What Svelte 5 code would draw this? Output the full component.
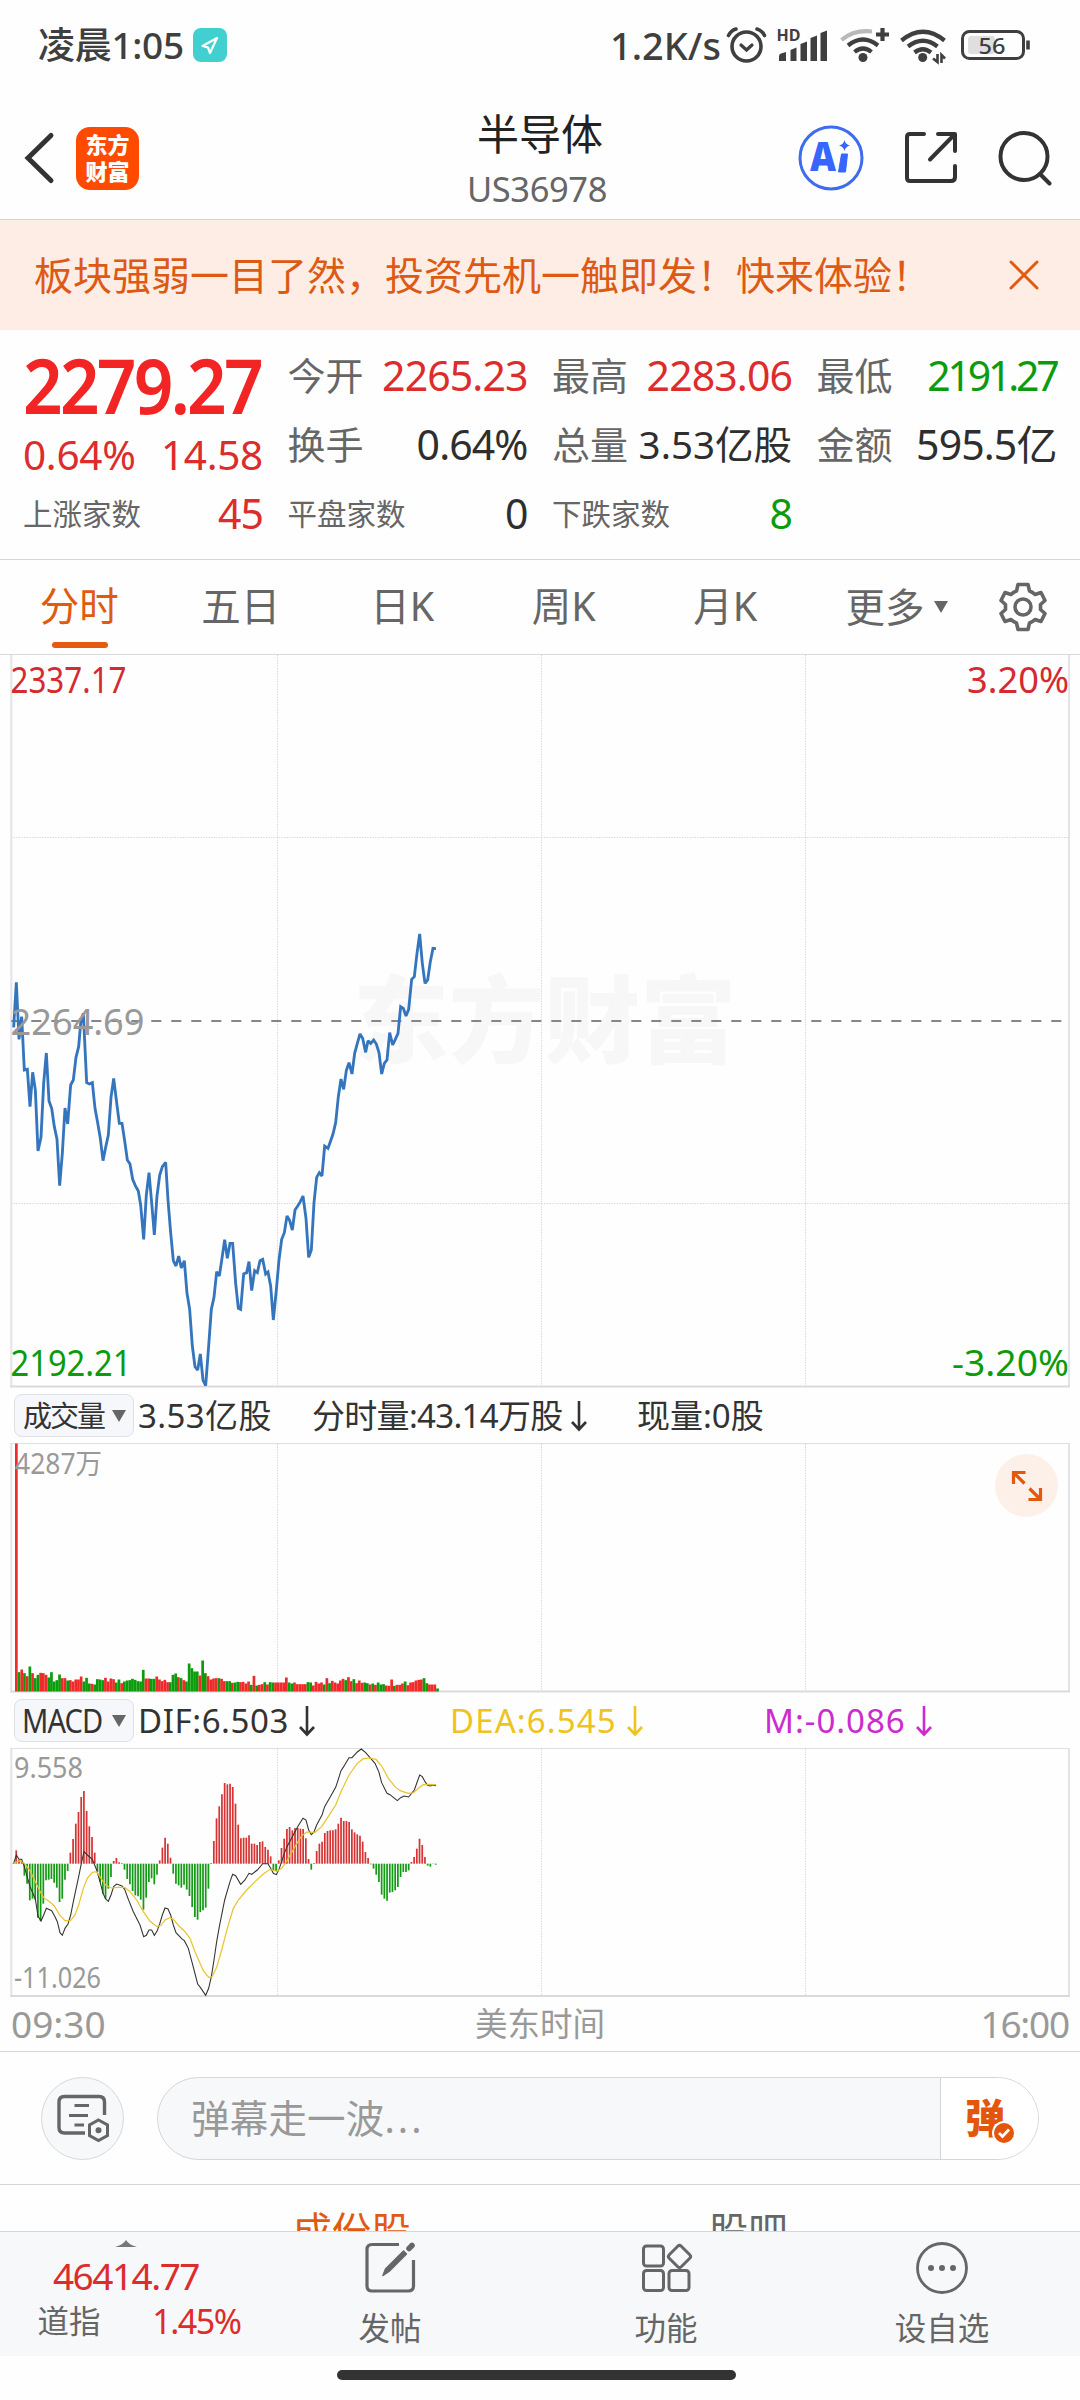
<script>
  const quotes = [
    [
      { label: '今开', value: '2265.23', tone: 'up' },
      { label: '换手', value: '0.64%', tone: 'flat' },
      { label: '平盘家数', value: '0', tone: 'flat', small: true }
    ],
    [
      { label: '最高', value: '2283.06', tone: 'up' },
      { label: '总量', value: '3.53亿股', tone: 'flat', fit: 'tight' },
      { label: '下跌家数', value: '8', tone: 'down', small: true }
    ],
    [
      { label: '最低', value: '2191.27', tone: 'down', fit: 'narrow' },
      { label: '金额', value: '595.5亿', tone: 'flat' }
    ]
  ];
  const tabs = ['分时', '五日', '日K', '周K', '月K'];

  // Price path, three units per pixel, measured from the chart's y = 900 line
  const price =
    '41,382 49,247 57,418 65,350 73,510 82,508 90,620 98,517 106,570 114,753 123,712 131,550 139,459 147,603 155,625 163,680 171,718 179,857 187,760 195,624 203,672 212,555 220,540 228,472 236,440 242,370 250,340 260,548 268,552 277,548 285,625 293,668 301,715 309,782 317,742 325,705 333,592 341,535 350,608 358,670 366,670 374,722 382,780 390,792 398,838 406,857 415,873 422,915 431,1018 439,885 447,818 455,908 463,1005 471,888 479,826 487,800 497,787 504,900 512,998 520,1082 528,1098 536,1068 544,1104 553,1082 561,1180 569,1228 577,1338 585,1400 593,1410 601,1362 609,1440 617,1457 626,1338 634,1228 642,1192 650,1115 658,1128 666,1075 674,1019 682,1075 690,1030 698,1030 707,1150 715,1225 722,1228 731,1122 740,1118 747,1085 755,1172 764,1112 772,1118 780,1082 788,1078 797,1122 804,1116 812,1158 820,1260 829,1170 837,1080 845,1018 853,998 861,948 869,962 877,990 885,930 893,918 901,905 909,888 918,955 926,1072 934,1050 942,908 950,832 958,818 966,828 974,738 984,745 991,725 999,702 1007,668 1015,590 1023,537 1031,568 1039,512 1047,488 1056,522 1064,460 1072,430 1080,402 1088,415 1097,457 1104,422 1112,430 1121,420 1129,432 1137,458 1145,522 1153,490 1161,480 1169,398 1178,435 1186,418 1194,400 1202,320 1210,325 1218,348 1226,328 1235,238 1243,230 1251,160 1259,102 1267,190 1275,250 1283,240 1291,185 1299,145 1308,146';

  // Volume per minute: r = rising, g = falling
  const volumes =
    'r744 g58 r66 g55 r46 g75 r55 g40 g50 r56 r55 r50 g42 g58 g30 g34 g51 r40 r40 g33 r34 r30 r36 r36 r45 g30 g41 g24 r23 g21 g37 g36 g34 r41 r30 r39 r37 g27 g36 r25 g30 g33 g34 g38 g35 g31 g30 g65 r39 r39 g38 g38 r45 r36 r31 r35 r28 g28 g50 g54 r43 g40 r34 g30 g84 g70 g60 g60 r48 g93 g55 r46 r36 r39 r40 g40 r38 r31 g31 g31 r26 g27 g29 r28 r29 r24 r30 g20 r47 g18 r20 r22 g28 r21 g28 g27 r27 r27 r27 r27 r42 g27 g24 r27 r22 r22 r22 r22 g28 g27 r18 r29 r24 r27 g21 r40 g25 r32 r27 r24 r33 r38 g34 r43 r31 g37 r25 r33 r26 g27 g25 r21 g24 r20 g27 g21 g22 r18 r17 r36 g17 r20 r20 r24 g30 r19 r27 r28 r33 r35 r36 g40 g25 r21 r21 r21 g9'
      .split(' ')
      .map((v, i) => ({ x: 15 + i * 2.7, h: Number(v.slice(1)) / 3, up: v[0] === 'r' }));

  const histogram =
    '0 40 12 8 -36 -60 -110 -105 -108 -162 -172 -120 -50 -48 -46 -57 -72 -115 -105 -48 -22 33 74 120 155 200 218 158 112 80 33 -25 -55 -90 -105 -75 -40 8 17 4 0 -18 -46 -62 -82 -95 -98 -108 -138 -102 -55 -44 -62 -33 10 48 78 60 18 -30 -60 -65 -72 -63 -78 -97 -130 -160 -168 -145 -140 -132 -75 0 68 136 172 208 242 238 240 230 180 117 76 78 78 85 60 60 56 65 67 50 42 22 -20 -22 10 47 75 104 110 100 107 107 105 104 76 14 -18 0 38 60 66 92 98 100 100 103 120 138 128 128 125 103 94 88 84 66 35 17 -2 -15 -33 -55 -93 -105 -111 -87 -85 -80 -70 -40 -25 -25 -20 5 20 45 75 56 20 -6 -9 -1 -3'
      .split(' ')
      .map((v, i) => ({ x: 40.6 + i * 8.12, v: Number(v) }));

  const dif =
    '41,490 49,465 57,478 65,478 73,500 90,560 106,597 114,648 123,663 131,645 139,625 155,632 165,650 172,665 180,698 187,706 195,685 204,672 212,645 220,605 236,530 244,490 252,455 262,465 277,478 290,510 300,545 309,580 317,597 325,604 333,585 341,560 350,552 366,558 374,568 385,598 400,635 420,675 431,710 439,706 447,690 455,690 463,706 471,694 479,672 487,645 495,624 504,627 512,645 520,675 528,698 545,716 553,722 565,745 577,790 593,852 601,862 617,886 626,865 634,830 642,780 650,725 658,680 674,600 690,545 698,523 707,527 722,553 735,540 747,520 755,523 772,510 788,491 804,491 812,505 820,520 829,524 837,508 845,485 853,460 861,440 877,410 893,380 909,355 918,360 926,390 934,404 942,396 950,375 966,345 974,320 991,290 1007,262 1015,238 1023,212 1031,200 1047,173 1056,173 1072,156 1084,147 1097,158 1112,175 1125,190 1137,217 1145,248 1161,280 1170,284 1180,292 1192,302 1202,293 1212,288 1226,291 1243,270 1259,225 1267,230 1275,245 1283,256 1291,258 1299,255 1308,257';
  const dea =
    '41,490 60,482 73,490 90,512 106,545 123,580 131,593 147,604 163,618 179,645 195,662 211,662 225,645 236,615 250,565 262,535 277,517 290,515 301,532 317,555 333,564 355,562 374,562 390,575 410,600 430,635 450,664 471,680 483,676 495,660 510,653 520,658 537,678 553,693 570,715 585,755 610,812 626,832 636,830 650,802 665,750 682,685 700,625 715,600 740,570 765,545 790,522 810,508 830,514 845,505 861,482 885,440 905,407 920,396 945,397 965,380 991,340 1007,315 1023,275 1047,225 1072,190 1090,176 1110,174 1128,178 1145,198 1165,235 1185,260 1200,272 1225,280 1240,278 1255,265 1270,254 1285,253 1308,254';
  const gridX = [277.5, 541.5, 805.5];
</script>

{#snippet downArrow()}
  <svg class="down-arrow" width="16" height="32" viewBox="0 0 16 32">
    <path d="M8 1V29M1 22L8 29.5L15 22" fill="none" stroke="currentColor" stroke-width="2.6" />
  </svg>
{/snippet}

<div class="screen">
  <div class="status">
    <div class="clock">
      <span class="time">凌晨1:05</span>
      <span class="loc">
        <svg width="34" height="34" viewBox="0 0 34 34"><path d="M24 10L9.500 18L15 19.500L17 25Z" fill="none" stroke="#fff" stroke-width="2.200" stroke-linejoin="round" /></svg>
      </span>
    </div>
    <div class="signals">
      <span class="rate">1.2K/s</span>
      <svg width="313" height="40" viewBox="724 25 313 40" fill="none" stroke="#3f3f3f">
        <circle cx="746.500" cy="46.500" r="14.500" stroke-width="3.600" />
        <path d="M741 45L746.500 50L752 45" stroke-width="3.200" stroke-linecap="round" />
        <path d="M728.500 35.500Q731 30.500 736 29M757 29Q762 30.500 764.500 35.500" stroke-width="3.600" stroke-linecap="round" />
        <text class="hd" x="776.500" y="41" textLength="24" lengthAdjust="spacingAndGlyphs">HD</text>
        <g fill="#3f3f3f" stroke="none">
          <path d="M779 56Q779 54 781 53.500L786 52V61H779ZM790.500 50L796.500 47.500V61H790.500ZM800.500 44L807 41.500V61H800.500ZM810.500 38L817 35.500V61H810.500ZM820.500 33L827 30.500V61H820.500Z" />
          <circle cx="863" cy="57.500" r="4.500" />
          <circle cx="922.700" cy="57.500" r="4.500" />
        </g>
        <path d="M841.500 40Q854 29.500 872 31.500" stroke="#b9b9b9" stroke-width="4.200" />
        <path d="M848 45.500Q863 33.500 878 45.500M854.500 52Q863 45 871.500 52M882.500 28V41M876 34.500H889" stroke-width="4.200" />
        <path d="M901.500 40.500Q923 23 944.500 40.500M908 46.500Q923 35 937.500 46.500M914.500 52.500Q923 46 931 52.500" stroke-width="4.200" />
        <path d="M937.500 54V62L933 58.500M941.500 63V55L945 58.500" stroke-width="2.600" />
        <rect x="962.500" y="31.500" width="61" height="27" rx="7" stroke-width="3" />
        <rect x="968" y="36" width="27" height="18" rx="3" fill="#dfdfdf" stroke="none" />
        <path d="M1028 40.500V49.500" stroke-width="3.600" />
        <text class="batt" x="978.500" y="54" textLength="27" lengthAdjust="spacingAndGlyphs">56</text>
      </svg>
    </div>
  </div>

  <header>
    <div class="left">
      <svg width="32" height="54" viewBox="0 0 32 54"><path d="M28 4.500L5 27L28 49.500" fill="none" stroke="#333" stroke-width="5" stroke-linecap="round" /></svg>
      <div class="logo"><span>东方</span><span>财富</span></div>
    </div>
    <div class="title">
      <h1>半导体</h1>
      <p>US36978</p>
    </div>
    <div class="actions">
      <svg width="66" height="66" viewBox="0 0 66 66">
        <circle cx="33" cy="33" r="31" fill="none" stroke="#3f6bf0" stroke-width="3" />
        <text class="ai" x="12" y="46" textLength="26" lengthAdjust="spacingAndGlyphs">A</text>
        <path d="M43.500 29H49.500L47.500 47H40.500Z" fill="#3766ff" stroke="#3766ff" stroke-linejoin="round" />
        <path d="M46.500 15Q47.500 19.500 52 20.500Q47.500 21.500 46.500 26Q45.500 21.500 41 20.500Q45.500 19.500 46.500 15Z" fill="#3766ff" />
      </svg>
      <svg width="54" height="54" viewBox="0 0 54 54" fill="none" stroke="#333" stroke-width="4" stroke-linecap="round" stroke-linejoin="round">
        <path d="M20 3H6Q3 3 3 6V47Q3 50 6 50H47Q51 50 51 46V35M34 3H51V20M50 4L26 28.500" />
      </svg>
      <svg width="54" height="56" viewBox="0 0 54 56" fill="none" stroke="#333" stroke-width="4" stroke-linecap="round">
        <circle cx="26" cy="26.500" r="23.500" /><path d="M42 44L51.500 53.500" />
      </svg>
    </div>
  </header>

  <div class="banner">
    <span>板块强弱一目了然，投资先机一触即发！快来体验！</span>
    <svg width="30" height="30" viewBox="0 0 30 30"><path d="M2 2L28 28M28 2L2 28" stroke="#e5590f" stroke-width="3" stroke-linecap="round" /></svg>
  </div>

  <section class="quote">
    <div class="col">
      <div class="big">2279.27</div>
      <div class="change"><span>0.64%</span><span>14.58</span></div>
      <div class="cell"><span class="label small">上涨家数</span><span class="value up">45</span></div>
    </div>
    {#each quotes as column}
      <div class="col">
        {#each column as q}
          <div class="cell">
            <span class="label" class:small={q.small}>{q.label}</span>
            <span class="value {q.tone} {q.fit ?? ''}">{q.value}</span>
          </div>
        {/each}
      </div>
    {/each}
  </section>

  <nav class="tabs">
    {#each tabs as tab, i}
      <span class="tab" class:active={i === 0}>{tab}</span>
    {/each}
    <span class="more">更多<svg width="14" height="12" viewBox="0 0 14 12"><path d="M0 0H14L7 12Z" fill="#666" /></svg></span>
    <svg class="gear" width="48" height="50" viewBox="-24 -25 48 50" fill="none" stroke="#666" stroke-width="3.600" stroke-linejoin="round">
      <path d="M-5 -22.500H5L6.500 -16Q9.500 -15 12 -12.500L18 -14.500L22 -6.500L17.500 -2.500V2.500L22 6.500L18 14.500L12 12.500Q9.500 15 6.500 16L5 22.500H-5L-6.500 16Q-9.500 15 -12 12.500L-18 14.500L-22 6.500L-17.500 2.500V-2.500L-22 -6.500L-18 -14.500L-12 -12.500Q-9.500 -15 -6.500 -16Z" />
      <circle r="8" />
    </svg>
  </nav>

  <svg class="chart" width="1080" height="733" viewBox="0 655 1080 733">
    <text class="watermark" x="353" y="1056" textLength="383" lengthAdjust="spacingAndGlyphs">东方财富</text>
    <g class="grid">
      {#each gridX as x}<path d="M{x} 655V1386" />{/each}
      <path d="M11 837.500H1069M11 1203.500H1069" />
    </g>
    <path class="frame" d="M11.300 655V1386M1069 655V1386" />
    <path class="base" d="M10 1386.500H1070" />
    <path d="M11.300 1021H1063" stroke="#868686" stroke-width="2" stroke-dasharray="10 10" />
    <g transform="translate(0 900) scale(.33333)">
      <polyline points={price} fill="none" stroke="#3475bd" stroke-width="8.500" stroke-linejoin="miter" stroke-miterlimit="2" />
    </g>
    <g class="axis">
      <text x="10.500" y="693" textLength="116" lengthAdjust="spacingAndGlyphs" class="up">2337.17</text>
      <text x="967" y="693" textLength="102" lengthAdjust="spacingAndGlyphs" class="up">3.20%</text>
      <text x="10.500" y="1035" textLength="134" lengthAdjust="spacingAndGlyphs" class="mid">2264.69</text>
      <text x="10.500" y="1376" textLength="121" lengthAdjust="spacingAndGlyphs" class="down">2192.21</text>
      <text x="952" y="1376" textLength="117" lengthAdjust="spacingAndGlyphs" class="down">-3.20%</text>
    </g>
  </svg>

  <div class="indicator vol">
    <span class="chip"><b>成交量</b><svg width="14" height="12" viewBox="0 0 14 12"><path d="M0 0H14L7 12Z" fill="#666" /></svg></span>
    <span class="first">3.53亿股</span>
    <span class="second">分时量:43.14万股{@render downArrow()}</span>
    <span>现量:0股</span>
  </div>

  <div class="panel">
    <svg class="chart" width="1080" height="250" viewBox="0 1443 1080 250">
      <g class="grid">{#each gridX as x}<path d="M{x} 1444V1691" />{/each}</g>
      <path class="frame" d="M11.300 1443V1691M1069 1443V1691" />
      <path class="top" d="M10 1443.500H1070" />
      <path class="base" d="M10 1691.500H1070" />
      {#each volumes as v}
        <rect x={v.x} y={1691.5 - v.h} width="2.700" height={v.h} fill={v.up ? '#ee2a2a' : '#0b9b0b'} />
      {/each}
      <text class="scale" x="15" y="1473.500" textLength="87" lengthAdjust="spacingAndGlyphs">4287万</text>
    </svg>
    <div class="expand">
      <svg width="34" height="34" viewBox="0 0 34 34" fill="none" stroke="#e2590f" stroke-width="3.200">
        <path d="M3.500 15V3.500H15.500M4 4L14.500 14.500M30.500 19V30.500H18.500M30 30L19.500 19.500" />
      </svg>
    </div>
  </div>

  <div class="indicator macd">
    <span class="chip"><b>MACD</b><svg width="14" height="12" viewBox="0 0 14 12"><path d="M0 0H14L7 12Z" fill="#666" /></svg></span>
    <span class="dif">DIF:6.503{@render downArrow()}</span>
    <span class="dea">DEA:6.545{@render downArrow()}</span>
    <span class="m">M:-0.086{@render downArrow()}</span>
  </div>

  <svg class="chart" width="1080" height="250" viewBox="0 1748 1080 250">
    <g class="grid">{#each gridX as x}<path d="M{x} 1749V1996" />{/each}</g>
    <path class="frame" d="M11.300 1748V1996M1069 1748V1996" />
    <path class="top" d="M10 1748.500H1070" />
    <path class="base" d="M10 1996H1070" />
    <g transform="translate(0 1700) scale(.33333)" fill="none">
      {#each histogram as h}
        <path d="M{h.x} 491V{491 - h.v - (h.v === 0 ? 2 : 0)}" stroke={h.v < 0 ? '#159a15' : '#d63434'} stroke-width="5.200" />
      {/each}
      <polyline points={dif} stroke="#333" stroke-width="3.200" />
      <polyline points={dea} stroke="#e8c42c" stroke-width="3.600" />
    </g>
    <text class="scale" x="14" y="1778" textLength="69" lengthAdjust="spacingAndGlyphs">9.558</text>
    <text class="scale" x="14" y="1988" textLength="87" lengthAdjust="spacingAndGlyphs">-11.026</text>
  </svg>

  <div class="times"><span>09:30</span><span class="zone">美东时间</span><span>16:00</span></div>

  <div class="comment">
    <div class="round">
      <svg width="54" height="50" viewBox="0 0 54 50" fill="none" stroke="#666" stroke-width="3.400">
        <path d="M48.500 22V9Q48.500 3.500 43 3.500H8.500Q3 3.500 3 9V34.500Q3 40 8.500 40H29" />
        <path d="M18.500 12.500H33M13 22.500H32M18.500 32H28" stroke-width="3" />
        <path d="M42.500 27L51.500 32V42.500L42.500 47.500L33.500 42.500V32Z" stroke-width="3" />
        <circle cx="42.500" cy="37.200" r="3" fill="#666" stroke="none" />
      </svg>
    </div>
    <div class="input">
      <span>弹幕走一波<i>...</i></span>
      <div class="send">
        <b>弹</b>
        <svg class="check" width="24" height="24" viewBox="0 0 24 24"><circle cx="12" cy="12" r="12" fill="#fff" /><circle cx="12" cy="12" r="10" fill="#e4560c" /><path d="M7 12L10.500 15.500L17 8.500" fill="none" stroke="#fff" stroke-width="2.800" /></svg>
      </div>
    </div>
  </div>

  <div class="sub">
    <span class="active">成份股</span><span>股吧</span>
  </div>

  <footer>
    <div class="index">
      <svg width="22" height="7" viewBox="0 0 22 7"><path d="M0 7Q8 5 11 0Q14 5 22 7Z" fill="#777" /></svg>
      <strong>46414.77</strong>
      <div><span>道指</span><em>1.45%</em></div>
    </div>
    <div class="item">
      <svg width="54" height="54" viewBox="0 0 54 54">
        <path d="M36 3.500H9Q4 3.500 4 8.500V45Q4 50 9 50H45Q50.500 50 50.500 45V19" fill="none" stroke="#666" stroke-width="3.200" />
        <path d="M46 7.500L49 4.500" stroke="#666" stroke-width="5.500" stroke-linecap="round" />
        <path d="M40.500 10L43.500 13L26 30.500L20 34.500L22.500 28Z" fill="#666" stroke="#666" stroke-width="1.500" stroke-linejoin="round" />
      </svg>
      <span>发帖</span>
    </div>
    <div class="item">
      <svg width="54" height="54" viewBox="0 0 54 54" fill="none" stroke="#666" stroke-width="3">
        <rect x="4.500" y="5" width="20" height="20" rx="3" /><rect x="4.500" y="29.500" width="20" height="20" rx="3" /><rect x="30" y="29.500" width="20" height="20" rx="3" />
        <rect x="32" y="7" width="17" height="17" rx="2.500" transform="rotate(45 40.500 15.500)" />
      </svg>
      <span>功能</span>
    </div>
    <div class="item">
      <svg width="54" height="54" viewBox="0 0 54 54">
        <circle cx="27" cy="27" r="24.500" fill="none" stroke="#666" stroke-width="2.800" />
        <g fill="#666"><circle cx="16" cy="27" r="3" /><circle cx="27" cy="27" r="3" /><circle cx="38" cy="27" r="3" /></g>
      </svg>
      <span>设自选</span>
    </div>
  </footer>
  <div class="home"><i></i></div>
</div>

<style>
  :global(body) { margin: 0; background: #fff; }
  .screen {
    width: 1080px; height: 2400px; overflow: hidden; background: #fefefe; color: #333;
    font-family: 'Noto Sans', 'Noto Sans CJK SC', sans-serif; white-space: nowrap;
    display: flex; flex-direction: column;
  }
  .screen > * { flex-shrink: 0; }
  svg { display: block; flex-shrink: 0; }
  h1, p { margin: 0; font-weight: 400; }

  .status { height: 90px; box-sizing: border-box; padding: 0 43px 0 38px; display: flex; justify-content: space-between; align-items: center; color: #3f3f3f; }
  .clock, .signals { display: flex; align-items: center; }
  .time { font-size: 37px; font-weight: 500; letter-spacing: -.3px; line-height: 60px; width: 155px; }
  .loc { width: 34px; height: 34px; border-radius: 8px; background: #42cfcf; }
  .rate { font-size: 38px; font-weight: 500; line-height: 60px; width: 114px; }
  .hd { font: 700 16px 'Noto Sans', sans-serif; fill: #3f3f3f; stroke: none; }
  .batt { font: 500 22px 'Noto Sans', sans-serif; fill: #3f3f3f; stroke: none; }

  header { height: 129px; border-bottom: 1px solid #d3d3d8; display: grid; grid-template-columns: 1fr 200px 1fr; }
  .left { display: flex; align-items: center; padding-left: 23px; height: 122px; box-sizing: border-box; margin-top: 7px; gap: 21px; }
  .logo { width: 63px; height: 63px; border-radius: 14px; background: #ff4a00; color: #fff; display: flex; flex-direction: column; align-items: center; justify-content: center; font-size: 22px; font-weight: 900; line-height: 27px; font-family: 'Noto Sans CJK SC', sans-serif; }
  .logo span { position: relative; top: -1px; }
  .title { text-align: center; }
  h1 { font-size: 42px; line-height: 60px; margin-top: 14px; color: #222; }
  p { font-size: 34.500px; line-height: 40px; letter-spacing: -0.4px; color: #666; margin: 5px 6px 0 0; }
  .actions { display: flex; align-items: center; justify-content: flex-end; padding-right: 28px; height: 136px; gap: 40px; }
  .ai { font: 900 40px 'Noto Sans', sans-serif; fill: #3766ff; }

  .banner { height: 110px; background: #fdede4; display: flex; justify-content: space-between; align-items: center; padding: 0 41px 0 34px; color: #dc5a14; font-size: 39px; font-family: 'Noto Sans CJK SC', sans-serif; }
  .banner span { line-height: 60px; margin-top: -4px; }

  .quote { height: 218px; padding: 11px 24px 0 23px; border-bottom: 1px solid #d6d6d8; display: grid; grid-template-columns: repeat(4, 240px); column-gap: 24.5px; }
  .big { height: 90px; width: 258px; line-height: 88px; font-size: 75px; font-weight: 600; letter-spacing: -3px; color: #f22424; transform: scaleX(.925); transform-origin: left; }
  .change { height: 48px; display: flex; justify-content: space-between; font-size: 40.500px; line-height: 48px; color: #dc2c2c; letter-spacing: -.3px; }
  .cell { height: 69px; display: flex; justify-content: space-between; align-items: center; line-height: 69px; }
  .label { font-size: 38px; color: #666; }
  .label.small { font-size: 29.500px; }
  .value { font-size: 41px; letter-spacing: -0.9px; }
  .value.tight { font-size: 38.500px; letter-spacing: 0; }
  .value.narrow { letter-spacing: -3.200px; }
  .up { color: #dc2c2c; fill: #d42a30; }
  .down { color: #0c9b0c; fill: #0c9b0c; }
  .flat { color: #2e2e2e; }

  .tabs { height: 94px; border-bottom: 1px solid #d9d9db; display: flex; align-items: center; font-size: 39.500px; color: #666; }
  .tab { width: 161.500px; height: 94px; line-height: 92px; text-align: center; position: relative; box-sizing: border-box; padding-right: 3px; }
  .tab.active { color: #e05a10; }
  .tab.active::after { content: ''; position: absolute; left: 52px; bottom: 6px; width: 56px; height: 6px; border-radius: 3px; background: #e35a10; }
  .more { display: flex; align-items: center; gap: 9px; padding-left: 38px; width: 154px; line-height: 92px; }
  .gear { margin-left: -1px; }

  .chart { overflow: visible; }
  .grid path { stroke: #d6d6da; stroke-width: 1; stroke-dasharray: 1.300 1.300; fill: none; }
  .frame { stroke: #e4e4e8; stroke-width: 2; }
  .top { stroke: #e0e0e3; stroke-width: 1; }
  .base { stroke: #dadadd; stroke-width: 1.800; }
  .watermark { font: 900 95px 'Noto Sans CJK SC', sans-serif; fill: #f7f7f7; }
  .axis text { font-size: 37px; }
  .mid { fill: #999; }
  .scale { font-size: 28.500px; fill: #999; }

  .indicator { height: 55px; display: flex; align-items: center; font-size: 33px; line-height: 50px; box-sizing: border-box; padding-left: 14px; }
  .indicator span { display: flex; align-items: center; }
  .chip { width: 120px; height: 43px; box-sizing: border-box; border: 1px solid #dfe1e8; border-radius: 8px; background: #f6f7fa; justify-content: space-between; padding: 0 7px 0 8px; margin-right: 4px; font-size: 29px; }
  .chip b { font-weight: 400; letter-spacing: -2px; }
  .macd .chip b { font-size: 33px; display: inline-block; transform: scaleX(.88); transform-origin: left; width: 78px; letter-spacing: -1px; margin-left: -1px; }
  .down-arrow { margin-left: 10px; }
  .first { width: 174px; letter-spacing: .4px; }
  .second { width: 325px; }
  .vol .second { letter-spacing: -.7px; }
  .vol .down-arrow { margin-left: 8px; }
  .dif { width: 312px; letter-spacing: .6px; }
  .dea { width: 314px; color: #efc31e; letter-spacing: 1.100px; }
  .m { color: #cb2ccb; letter-spacing: 1px; }

  .panel { position: relative; }
  .expand { position: absolute; left: 995px; top: 11px; width: 63px; height: 63px; border-radius: 50%; background: #fdf0e8; display: flex; align-items: center; justify-content: center; }

  .times { height: 53px; border-bottom: 1px solid #d6d6d8; display: grid; grid-template-columns: 1fr auto 1fr; padding: 0 11px; font-size: 37px; line-height: 51px; color: #999; }
  .times span:last-child { text-align: right; letter-spacing: -1.200px; }
  .times .zone { font-size: 32.500px; }

  .comment { height: 132px; border-bottom: 1px solid #d6d6d8; display: flex; align-items: center; padding-left: 41px; gap: 33px; }
  .round { width: 83px; height: 83px; box-sizing: border-box; border-radius: 50%; border: 1px solid #d6d8de; background: #f7f8fa; display: flex; align-items: center; justify-content: center; }
  .input { width: 882px; height: 83px; box-sizing: border-box; border: 1px solid #d3d6dc; border-radius: 42px; background: #f7f8fa; overflow: hidden; display: flex; justify-content: space-between; align-items: center; padding-left: 33px; font-size: 38.500px; color: #999; letter-spacing: .2px; }
  .input span { margin-top: -4px; }
  .input span i { font-style: normal; letter-spacing: 3px; }
  .send { position: relative; width: 97px; height: 83px; border-left: 1px solid #d3d6dc; background: #fff; color: #e4560c; }
  .send b { display: block; font: 900 40px/78px 'Noto Sans CJK SC', sans-serif; padding-left: 24px; }
  .check { position: absolute; left: 51px; top: 44px; }

  .sub { height: 46px; overflow: hidden; display: flex; justify-content: center; gap: 298px; font-size: 39.500px; line-height: 93px; color: #666; border-bottom: 1px solid #d6d6d8; }
  .sub .active { color: #e05a10; }

  footer { height: 124px; background: #f7f8fa; display: grid; grid-template-columns: 252px 276px 276px 276px; color: #666; font-size: 31.500px; }
  .index { display: flex; flex-direction: column; align-items: center; padding-top: 8px; }
  .index strong { font-size: 37px; font-weight: 400; line-height: 46px; letter-spacing: -1.500px; color: #dc2c2c; margin-top: 6px; }
  .index div { width: 203px; display: flex; justify-content: space-between; line-height: 44px; padding-left: 26px; }
  .index em { font-style: normal; font-size: 34px; letter-spacing: -1.500px; color: #dc2c2c; }
  .item { display: flex; flex-direction: column; align-items: center; padding-top: 9px; }
  .item span { line-height: 40px; margin-top: 13px; }
  .home { height: 44px; display: flex; justify-content: center; }
  .home i { width: 399px; height: 10px; border-radius: 5px; background: #333; margin-top: 14px; margin-right: 7px; }
</style>
